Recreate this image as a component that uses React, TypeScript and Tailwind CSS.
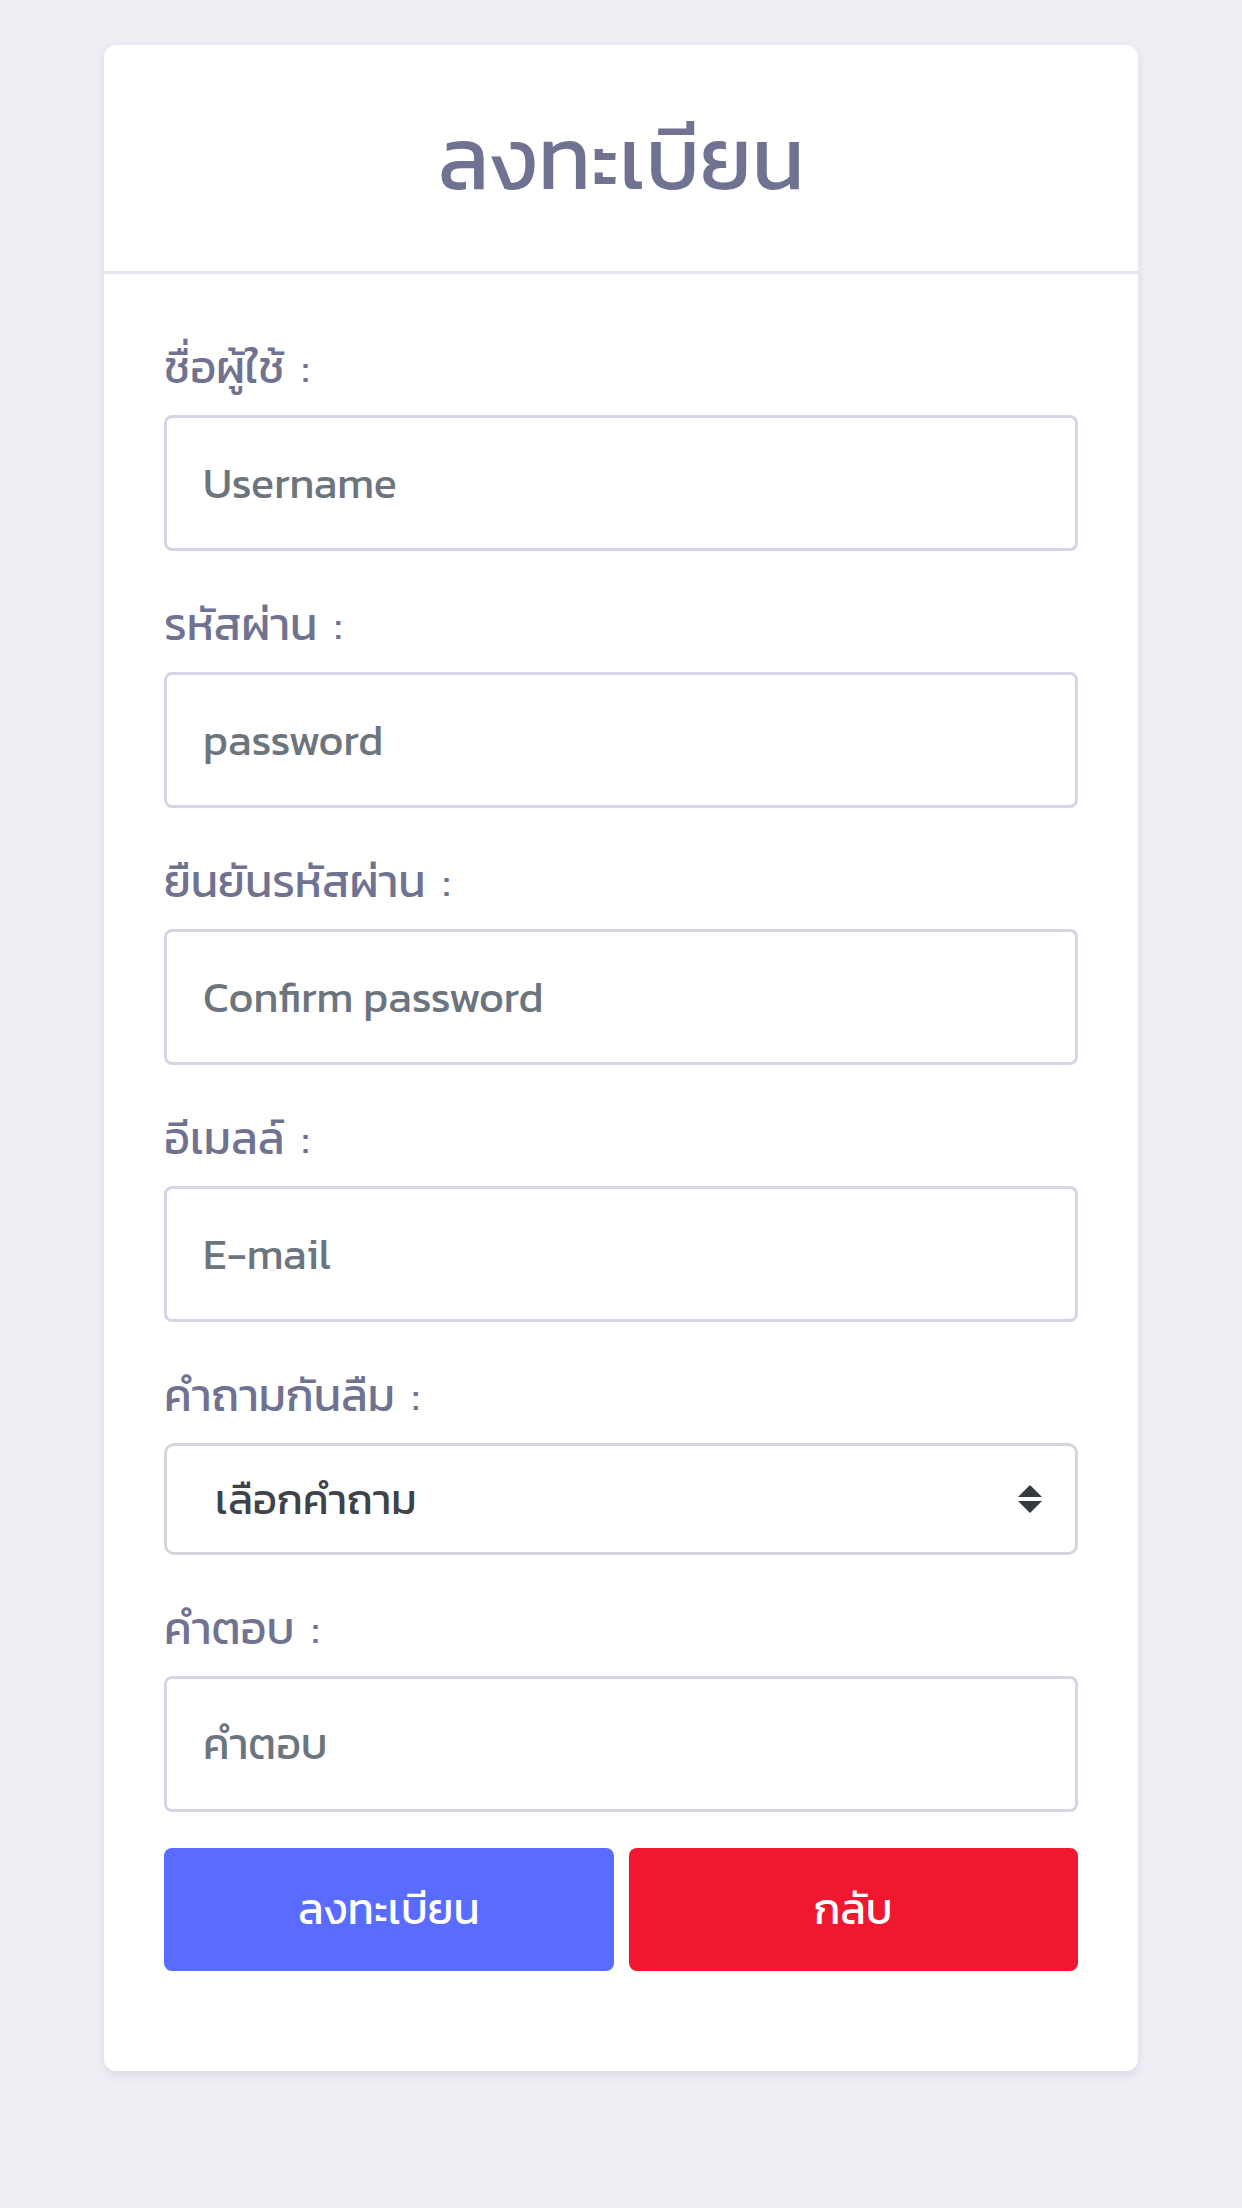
import React from 'react';

// Registration form (ลงทะเบียน) — single centered card on a pale lavender page.

const FONT = '"Kanit", "Noto Sans Thai", "Noto Sans", "Liberation Sans", sans-serif';

const fields: { label: string; placeholder: string; type: string }[] = [
  { label: 'ชื่อผู้ใช้', placeholder: 'Username', type: 'text' },
  { label: 'รหัสผ่าน', placeholder: 'password', type: 'password' },
  { label: 'ยืนยันรหัสผ่าน', placeholder: 'Confirm password', type: 'password' },
  { label: 'อีเมลล์', placeholder: 'E-mail', type: 'email' },
];

function Label({ children, first }: { children: React.ReactNode; first?: boolean }) {
  return (
    <label
      className={`block h-[60px] text-[45px] leading-[60px] text-[#6f7290] ${
        first ? 'mt-0' : 'mt-[43px]'
      } mb-[18px]`}
    >
      {children}
      <span className="ml-[17px]">:</span>
    </label>
  );
}

function TextInput({ placeholder, type }: { placeholder: string; type: string }) {
  return (
    <input
      type={type}
      placeholder={placeholder}
      className="block h-[136px] w-full rounded-[8px] border-[3px] border-[#d6d4e7] bg-white px-[36px] text-[43px] text-[#495057] outline-none placeholder:text-[#6c757d]"
    />
  );
}

export default function App() {
  return (
    <div
      className="min-h-[2208px] w-full bg-[#eeeff5] pt-[45px]"
      style={{ fontFamily: FONT }}
    >
      <div className="mx-auto w-[1034px] rounded-[12px] bg-white shadow-[0_4px_10px_rgba(60,60,110,0.12)]">
        {/* header */}
        <div className="flex h-[229px] items-center justify-center border-b-[3px] border-[#e6e5f1]">
          <h1 className="text-[87px] leading-none text-[#6f7290]">ลงทะเบียน</h1>
        </div>

        {/* body */}
        <form className="px-[60px] pt-[63px] pb-[100px]" onSubmit={(e) => e.preventDefault()}>
          {fields.map((f, i) => (
            <div key={f.placeholder}>
              <Label first={i === 0}>{f.label}</Label>
              <TextInput placeholder={f.placeholder} type={f.type} />
            </div>
          ))}

          <Label>คำถามกันลืม</Label>
          <div className="relative">
            <select
              defaultValue=""
              className="block h-[112px] w-full appearance-none rounded-[10px] border-[3px] border-[#d3d6dc] bg-white pl-[48px] text-[42px] text-[#3d4349] outline-none"
            >
              <option value="">เลือกคำถาม</option>
            </select>
            <svg
              className="pointer-events-none absolute right-[35px] top-1/2 -translate-y-1/2"
              width="26"
              height="32"
              viewBox="0 0 26 32"
            >
              <path d="M13 2 L25 14 H1 Z" fill="#343a40" />
              <path d="M1 18 H25 L13 30 Z" fill="#343a40" />
            </svg>
          </div>

          <Label>คำตอบ</Label>
          <TextInput placeholder="คำตอบ" type="text" />

          <div className="mt-[36px] flex gap-[15px]">
            <button
              type="submit"
              className="h-[123px] flex-1 rounded-[8px] bg-[#5a6bff] text-[43px] text-white"
            >
              ลงทะเบียน
            </button>
            <button
              type="button"
              className="h-[123px] flex-1 rounded-[8px] bg-[#ef182e] text-[43px] text-white"
            >
              กลับ
            </button>
          </div>
        </form>
      </div>
    </div>
  );
}
